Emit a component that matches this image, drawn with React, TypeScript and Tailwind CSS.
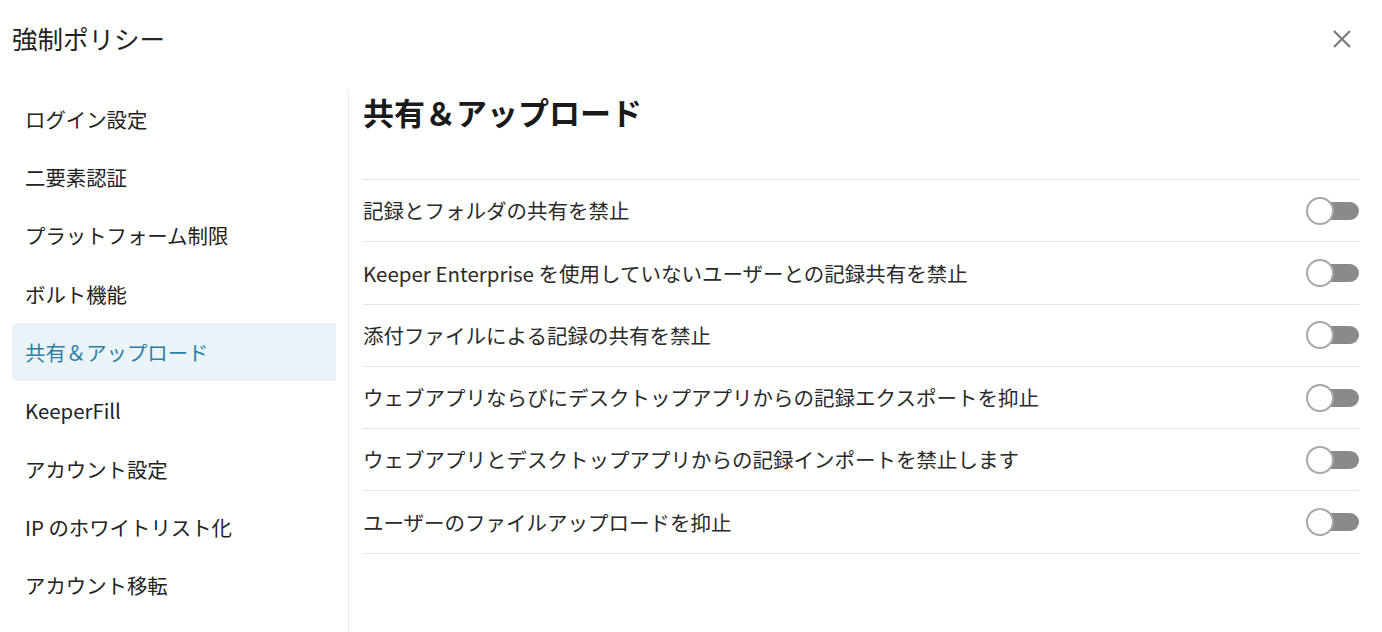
const menuItems = [
  "ログイン設定",
  "二要素認証",
  "プラットフォーム制限",
  "ボルト機能",
  "共有＆アップロード",
  "KeeperFill",
  "アカウント設定",
  "IP のホワイトリスト化",
  "アカウント移転",
];

const policies = [
  "記録とフォルダの共有を禁止",
  "Keeper Enterprise を使用していないユーザーとの記録共有を禁止",
  "添付ファイルによる記録の共有を禁止",
  "ウェブアプリならびにデスクトップアプリからの記録エクスポートを抑止",
  "ウェブアプリとデスクトップアプリからの記録インポートを禁止します",
  "ユーザーのファイルアップロードを抑止",
];

const ACTIVE = "共有＆アップロード";

function Toggle() {
  return (
    <div className="relative h-[28px] w-[53px] shrink-0">
      <div className="absolute right-0 top-[5px] h-[18px] w-[40px] rounded-full bg-[#8a8a8a]" />
      <div className="absolute left-0 top-0 h-[28px] w-[28px] rounded-full border-2 border-[#a8a8a8] bg-white" />
    </div>
  );
}

export default function App() {
  return (
    <div
      className="h-[632px] w-[1382px] overflow-hidden bg-white text-[#222]"
      style={{ fontFamily: '"Noto Sans CJK JP", "Noto Sans", sans-serif' }}
    >
      <header className="flex h-[90px] items-start justify-between pl-3 pr-[30px] pt-[19px]">
        <h1 className="text-[25.5px] leading-[38px] text-[#222]">強制ポリシー</h1>
        <button type="button" className="mt-[10px] text-[#7a7a7a]">
          <svg width="20" height="20" viewBox="0 0 20 20" fill="none">
            <path d="M2 2L18 18M18 2L2 18" stroke="currentColor" strokeWidth="2.2" />
          </svg>
        </button>
      </header>

      <div className="flex">
        <nav className="h-[542px] w-[349px] shrink-0 border-r border-[#ececec] px-3">
          {menuItems.map((item) => {
            const active = item === ACTIVE;
            return (
              <div
                key={item}
                className={`flex h-[58.3px] items-center px-[13px] text-[20.4px] ${
                  active ? "bg-[#eaf4f8] text-[#2c7fa6]" : "text-[#222]"
                }`}
              >
                {item}
              </div>
            );
          })}
        </nav>

        <main className="flex-1 pl-[14px] pr-[23px]">
          <h2 className="pt-[2px] text-[31px] font-bold leading-[40px] text-[#1a1a1a]">
            共有＆アップロード
          </h2>
          <div className="mt-[47px] border-t border-[#e4e4e4]">
            {policies.map((p) => (
              <div
                key={p}
                className="flex h-[62.3px] items-center justify-between border-b border-[#e4e4e4] text-[20.5px] text-[#2a2a2a]"
              >
                <span>{p}</span>
                <Toggle />
              </div>
            ))}
          </div>
        </main>
      </div>
    </div>
  );
}
